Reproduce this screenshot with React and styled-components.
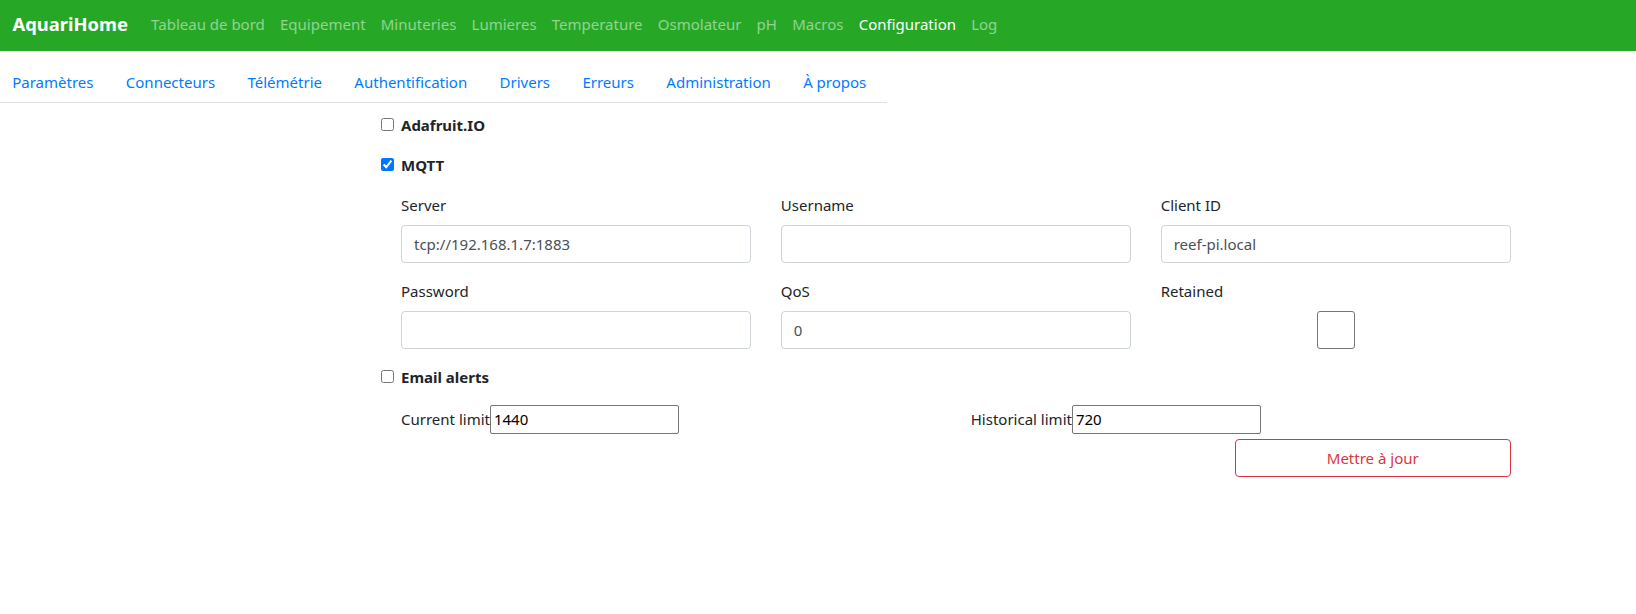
import React from "react";
import styled, { createGlobalStyle } from "styled-components";

const GlobalStyle = createGlobalStyle`
  body {
    margin: 0;
    font-family: "Segoe UI", "Noto Sans", sans-serif;
    font-size: 15px;
    line-height: 24px;
    color: #212529;
    background: #fff;
  }
  * { box-sizing: border-box; }
`;

const mainLinks = [
  "Tableau de bord",
  "Equipement",
  "Minuteries",
  "Lumieres",
  "Temperature",
  "Osmolateur",
  "pH",
  "Macros",
  "Configuration",
  "Log",
];

const tabs = [
  "Paramètres",
  "Connecteurs",
  "Télémétrie",
  "Authentification",
  "Drivers",
  "Erreurs",
  "Administration",
  "À propos",
];

const App = () => {
  return (
    <>
      <GlobalStyle />
      <Navbar>
        <Brand>AquariHome</Brand>
        {mainLinks.map((l) => (
          <NavLink key={l} $active={l === "Configuration"}>
            {l}
          </NavLink>
        ))}
      </Navbar>
      <Tabs>
        {tabs.map((t) => (
          <Tab key={t}>{t}</Tab>
        ))}
      </Tabs>
      <Content>
        <CheckRow>
          <Check type="checkbox" />
          <CheckLabel>Adafruit.IO</CheckLabel>
        </CheckRow>
        <CheckRow>
          <Check type="checkbox" defaultChecked />
          <CheckLabel>MQTT</CheckLabel>
        </CheckRow>
        <FieldGrid>
          <Field>
            <Label>Server</Label>
            <Input defaultValue="tcp://192.168.1.7:1883" />
          </Field>
          <Field>
            <Label>Username</Label>
            <Input defaultValue="" />
          </Field>
          <Field>
            <Label>Client ID</Label>
            <Input defaultValue="reef-pi.local" />
          </Field>
          <Field>
            <Label>Password</Label>
            <Input type="password" defaultValue="" />
          </Field>
          <Field>
            <Label>QoS</Label>
            <Input defaultValue="0" />
          </Field>
          <Field>
            <Label>Retained</Label>
            <BoxWrap>
              <BigCheck type="checkbox" />
            </BoxWrap>
          </Field>
        </FieldGrid>
        <CheckRow>
          <Check type="checkbox" />
          <CheckLabel>Email alerts</CheckLabel>
        </CheckRow>
        <LimitGrid>
          <Limit>
            <LimitLabel>Current limit</LimitLabel>
            <PlainInput defaultValue="1440" />
          </Limit>
          <Limit>
            <LimitLabel>Historical limit</LimitLabel>
            <PlainInput defaultValue="720" />
          </Limit>
        </LimitGrid>
        <Actions>
          <UpdateButton>Mettre à jour</UpdateButton>
        </Actions>
      </Content>
    </>
  );
};

const Navbar = styled.nav`
  height: 51px;
  background: #26a826;
  display: flex;
  align-items: center;
  padding: 0 12.5px 3px;
  white-space: nowrap;
`;

const Brand = styled.span`
  color: #fff;
  font-size: 18.4px;
  font-weight: 700;
  margin-right: 15.5px;
`;

const NavLink = styled.a`
  color: ${(p) => (p.$active ? "#fff" : "rgba(255,255,255,0.5)")};
  padding: 8px 7.6px;
  cursor: pointer;
`;

const Tabs = styled.ul`
  list-style: none;
  display: flex;
  margin: 11px 0 0 -4px;
  padding: 0;
  width: 891px;
  white-space: nowrap;
  border-bottom: 1px solid #dee2e6;
`;

const Tab = styled.li`
  color: #007bff;
  padding: 8px 16.2px;
`;

const Content = styled.div`
  margin-left: 381px;
  width: 1129.5px;
  padding-top: 9.5px;
`;

const CheckRow = styled.div`
  display: flex;
  align-items: center;
  margin-bottom: 16px;
`;

const Check = styled.input`
  width: 13px;
  height: 13px;
  margin: 0 7px 0 0;
`;

const CheckLabel = styled.label`
  font-weight: 700;
`;

const FieldGrid = styled.div`
  display: grid;
  grid-template-columns: repeat(3, 1fr);
  column-gap: 30px;
  padding-left: 20px;
`;

const Field = styled.div`
  display: flex;
  flex-direction: column;
  margin-bottom: 16px;
`;

const Label = styled.label`
  margin-bottom: 8px;
`;

const Input = styled.input`
  height: 38px;
  padding: 6px 12px;
  font: inherit;
  color: #495057;
  border: 1px solid #ced4da;
  border-radius: 4px;
  outline: none;
`;

const BoxWrap = styled.div`
  display: flex;
  justify-content: center;
`;

const BigCheck = styled.input`
  appearance: none;
  margin: 0;
  width: 38px;
  height: 38px;
  border: 1px solid #767676;
  border-radius: 3px;
  background: #fff;
`;

const LimitGrid = styled.div`
  display: grid;
  grid-template-columns: 1fr 1fr;
  column-gap: 30px;
  padding-left: 20px;
`;

const Limit = styled.div`
  display: flex;
  align-items: center;
`;

const LimitLabel = styled.label``;

const PlainInput = styled.input`
  width: 189px;
  height: 29px;
  margin: 0;
  padding: 1px 2px 1px 3px;
  font: inherit;
  font-size: 15px;
  color: #000;
  border: 1px solid #767676;
  border-radius: 2px;
`;

const Actions = styled.div`
  display: flex;
  justify-content: flex-end;
  margin-top: 5px;
`;

const UpdateButton = styled.button`
  width: 275.5px;
  height: 38px;
  font: inherit;
  color: #dc3545;
  background: #fff;
  border: 1px solid #dc3545;
  border-radius: 4px;
`;

export default App;
